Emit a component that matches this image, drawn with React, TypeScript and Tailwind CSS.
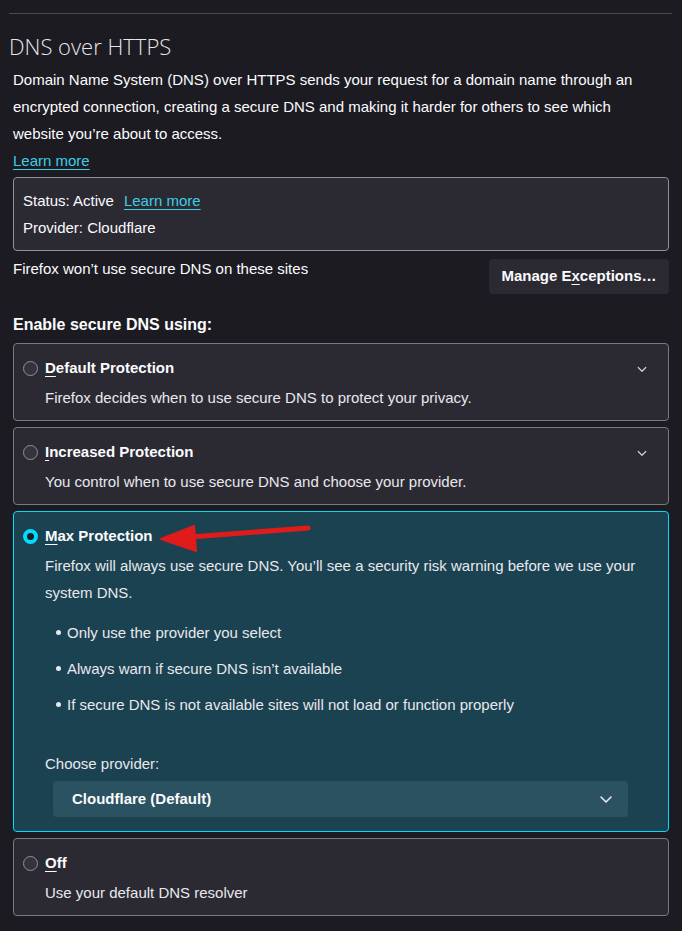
import React from "react";

const font = { fontFamily: '"Liberation Sans", Arial, sans-serif' };

function Chevron({ className }: { className?: string }) {
  return (
    <svg className={className} viewBox="0 0 16 16" fill="none" stroke="currentColor" strokeWidth="1.6" strokeLinecap="round" strokeLinejoin="round">
      <path d="M3 6l5 5 5-5" />
    </svg>
  );
}

function Radio({ checked }: { checked?: boolean }) {
  if (checked) {
    return <span className="w-[15px] h-[15px] rounded-full border-[4px] border-[#00ddff] bg-[#1c1b22] shrink-0" />;
  }
  return <span className="w-[15px] h-[15px] rounded-full border border-[#8f8f9d] bg-[#35343c] shrink-0" />;
}

function OptionCard({
  access,
  rest,
  desc,
  chevron,
}: {
  access: string;
  rest: string;
  desc: string;
  chevron?: boolean;
}) {
  return (
    <div className="rounded-[4px] border border-[#7a7982] bg-[#2b2a33] pt-[11px] pb-[9px] pl-[9px] pr-[20px]">
      <div className="flex items-center h-[27px]">
        <Radio />
        <span className="ml-[7px] font-bold text-[15px] text-[#fbfbfe]">
          <span className="underline underline-offset-[3px]">{access}</span>
          {rest}
        </span>
        {chevron && <Chevron className="ml-auto w-[12px] h-[12px] text-[#d0d0d6]" />}
      </div>
      <div className="mt-[2px] pl-[22px] leading-[27px] text-[15px] text-[#e8e8ee]">{desc}</div>
    </div>
  );
}

export default function App() {
  return (
    <div className="w-[682px] h-[931px] bg-[#1c1b22] text-[#fbfbfe] overflow-hidden" style={font}>
      <div className="pt-[13px] pl-[9px] pr-[10px]">
        <div className="h-px bg-[#4a4950]" />
      </div>
      <h1 className="pl-[9px] mt-[18px] text-[22px] leading-[28px] font-light text-[#e6e6ea]" style={{ fontFamily: '"Open Sans", "Liberation Sans", sans-serif' }}>
        DNS over HTTPS
      </h1>
      <div className="px-[13px]">
        <p className="mt-[6px] max-w-[625px] text-[15px] leading-[27px] text-[#fbfbfe]">
          Domain Name System (DNS) over HTTPS sends your request for a domain name through an encrypted connection, creating a secure DNS and making it harder for others to see which website you’re about to access.
        </p>
        <div className="leading-[27px] text-[15px]">
          <span className="text-[#3fcde6] underline underline-offset-[3px]">Learn more</span>
        </div>

        <div className="mt-[3px] rounded-[4px] border border-[#8f8f9d] bg-[#2b2a33] pl-[9px] pt-[9px] pb-[9px] text-[15px] leading-[27px]">
          <div>
            Status: Active
            <span className="ml-[10px] text-[#3fcde6] underline underline-offset-[3px]">Learn more</span>
          </div>
          <div>Provider: Cloudflare</div>
        </div>

        <div className="flex items-start justify-between mt-[4px]">
          <div className="text-[15px] leading-[27px]">Firefox won’t use secure DNS on these sites</div>
          <button className="mt-[4px] h-[35px] w-[180px] rounded-[4px] bg-[#2b2a33] text-[15px] font-bold text-[#fbfbfe]">
            Manage E<span className="underline underline-offset-[3px]">x</span>ceptions…
          </button>
        </div>

        <div className="mt-[17px] text-[16px] leading-[27px] font-bold">Enable secure DNS using:</div>

        <div className="mt-[5px] flex flex-col gap-[6px]">
          <OptionCard access="D" rest="efault Protection" desc="Firefox decides when to use secure DNS to protect your privacy." chevron />
          <OptionCard access="I" rest="ncreased Protection" desc="You control when to use secure DNS and choose your provider." chevron />

          <div className="relative rounded-[4px] border border-[#00ddff] bg-[#1b4250] pt-[11px] pb-[14px] pl-[9px] pr-[20px]">
            <div className="flex items-center h-[27px]">
              <Radio checked />
              <span className="ml-[7px] font-bold text-[15px] text-[#fbfbfe]">
                <span className="underline underline-offset-[3px]">M</span>ax Protection
              </span>
            </div>
            <div className="pl-[22px]">
              <p className="mt-[2px] leading-[27px] text-[15px] text-[#e8e8ee]">
                Firefox will always use secure DNS. You’ll see a security risk warning before we use your system DNS.
              </p>
              <ul className="mt-[13px] flex flex-col gap-[9px] text-[15px] leading-[27px] text-[#e8e8ee]">
                {[
                  "Only use the provider you select",
                  "Always warn if secure DNS isn’t available",
                  "If secure DNS is not available sites will not load or function properly",
                ].map((t) => (
                  <li key={t} className="flex items-center">
                    <span className="ml-[11px] w-[5px] h-[5px] rounded-full bg-[#e8e8ee]" />
                    <span className="ml-[6px]">{t}</span>
                  </li>
                ))}
              </ul>
              <div className="mt-[32px] text-[15px] leading-[27px] text-[#e8e8ee]">Choose provider:</div>
              <div className="mt-[4px] ml-[8px] w-[575px] h-[36px] rounded-[4px] bg-[#2a5260] flex items-center pl-[19px] pr-[14px]">
                <span className="font-bold text-[15px] text-[#fbfbfe]">Cloudflare (Default)</span>
                <Chevron className="ml-auto w-[16px] h-[16px] text-[#e8e8ee]" />
              </div>
            </div>
            <svg className="absolute left-[130px] top-[4px] w-[180px] h-[40px] pointer-events-none" viewBox="0 0 180 40">
              <path d="M46 21 L164 12" stroke="#e01b1b" strokeWidth="5" strokeLinecap="round" />
              <path d="M17 23 L50 10 L52 35 Z" fill="#e01b1b" stroke="#e01b1b" strokeWidth="2" strokeLinejoin="round" />
            </svg>
          </div>

          <OptionCard access="O" rest="ff" desc="Use your default DNS resolver" />
        </div>
      </div>
    </div>
  );
}
